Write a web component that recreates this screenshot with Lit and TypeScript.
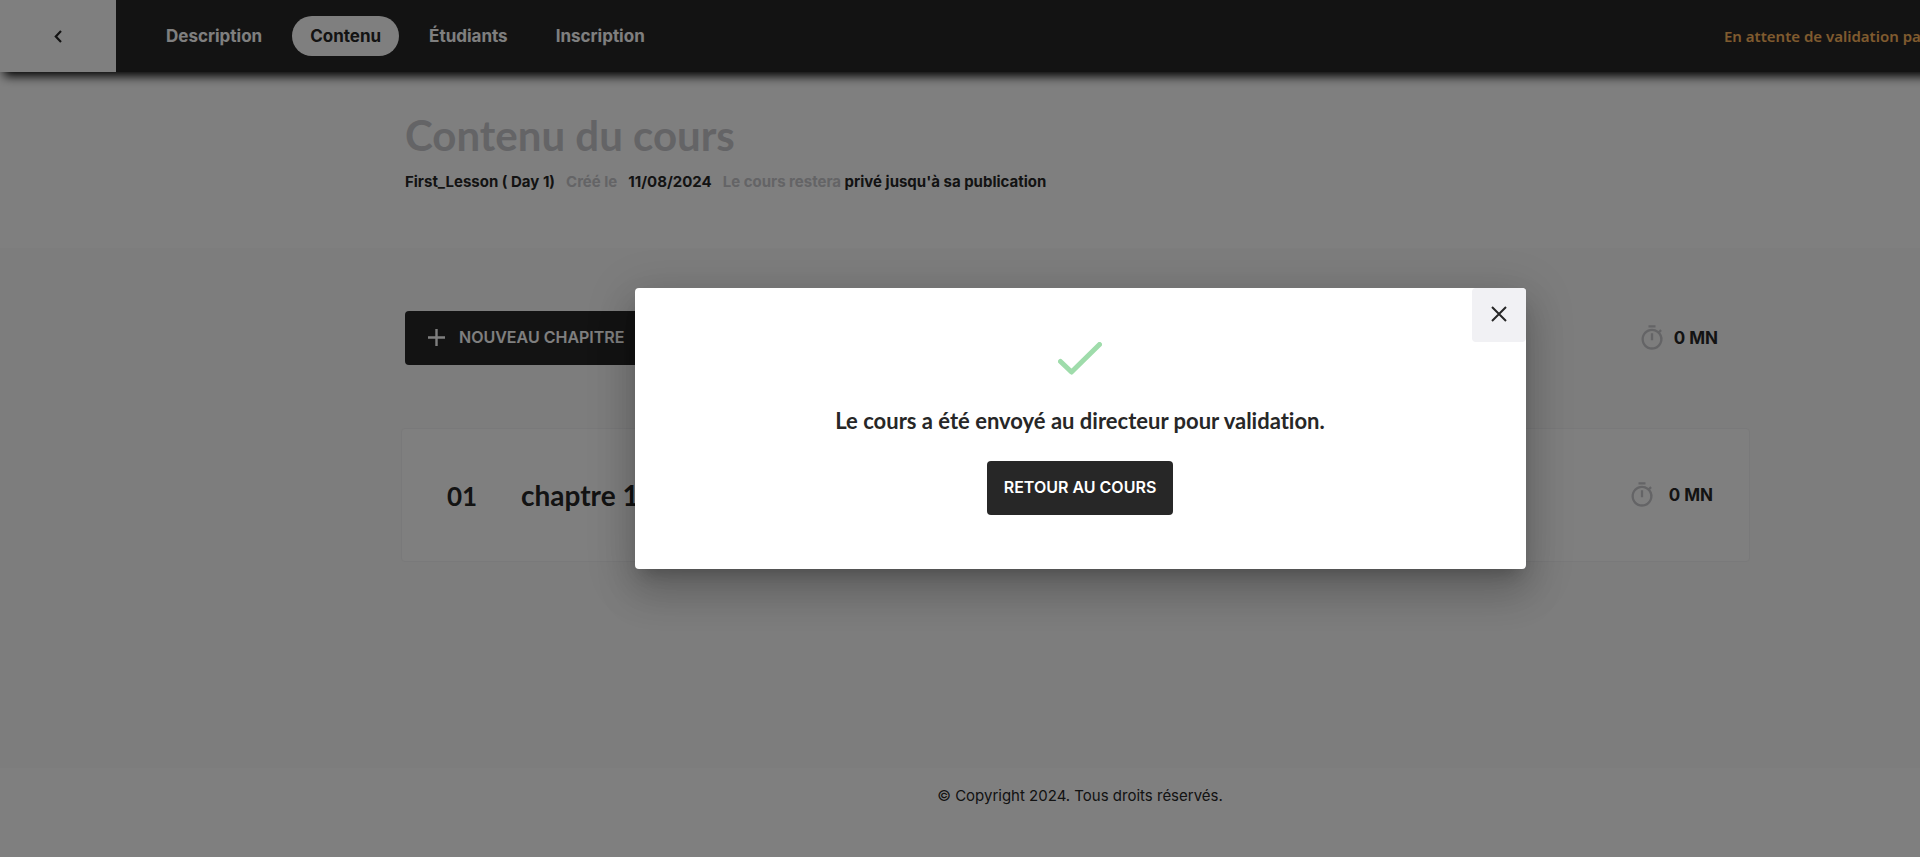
import { LitElement, html, css } from 'lit';
import { customElement, property } from 'lit/decorators.js';

@customElement('course-duration')
class CourseDuration extends LitElement {
  @property({ type: Number }) minutes = 0;

  static styles = css`
    :host {
      display: inline-flex;
      align-items: center;
      gap: var(--duration-gap, 8px);
      font-size: 17px;
      font-weight: 700;
      line-height: 24px;
      color: #272727;
    }
    .icon {
      display: block;
      width: 28px;
      height: 28px;
      fill: #c8c8cc;
    }
  `;

  render() {
    return html`
      <svg class="icon" viewBox="0 0 24 24" aria-hidden="true">
        <path
          d="M15 1H9v2h6V1zm-4 13h2V8h-2v6zm8.03-6.61 1.42-1.42c-.43-.51-.9-.99-1.41-1.41l-1.42 1.42A8.96 8.96 0 0 0 12 4c-4.97 0-9 4.03-9 9s4.02 9 9 9a8.994 8.994 0 0 0 7.03-14.61zM12 20c-3.87 0-7-3.13-7-7s3.13-7 7-7 7 3.13 7 7-3.13 7-7 7z"
        />
      </svg>
      <span>${this.minutes} MN</span>
    `;
  }
}

@customElement('app-root')
class AppRoot extends LitElement {
  static styles = css`
    :host {
      display: block;
      overflow: hidden;
      font-family: Inter, 'Liberation Sans', sans-serif;
      color: #272727;
    }
    * {
      box-sizing: border-box;
    }
    h1,
    h2,
    p {
      margin: 0;
    }
    button {
      font: inherit;
      border: 0;
      cursor: pointer;
    }
    .page {
      position: relative;
      display: flex;
      flex-direction: column;
      width: 112.5%;
      min-height: 100vh;
      background: #fff;
    }
    .topbar {
      position: relative;
      display: flex;
      height: 72px;
      background: #272727;
      box-shadow: 0 8px 10px -4px #000;
    }
    .back {
      display: flex;
      align-items: center;
      justify-content: center;
      width: 116px;
      padding: 0;
      background: #fff;
    }
    .back svg {
      width: 8px;
      height: 13px;
    }
    .nav {
      display: flex;
      flex: 1;
      align-items: center;
      gap: 12px;
      padding-left: 32px;
    }
    .nav a {
      padding: 8px 18px;
      border-radius: 20px;
      font-size: 17px;
      font-weight: 700;
      line-height: 24px;
      color: #fff;
      text-decoration: none;
    }
    .nav a.active {
      background: #fff;
      color: #272727;
    }
    .status {
      align-self: center;
      width: 436px;
      font-family: 'Noto Sans', sans-serif;
      font-size: 15px;
      font-weight: 600;
      line-height: 24px;
      color: #feb65e;
    }
    .container {
      width: 100%;
      max-width: 1350px;
      margin: 0 auto;
    }
    .hero {
      padding: 39px 0 54px;
    }
    .hero h1 {
      font-family: Lato, sans-serif;
      font-size: 42px;
      font-weight: 700;
      line-height: 48px;
      color: #c8c8cc;
    }
    .meta {
      display: flex;
      gap: 11px;
      padding-top: 11px;
      font-size: 15px;
      font-weight: 700;
      line-height: 24px;
    }
    .muted {
      color: #c8c8cc;
    }
    .content {
      flex: 1;
      padding-top: 63px;
      background: #fafafa;
    }
    .toolbar {
      display: flex;
      align-items: center;
      justify-content: space-between;
      padding-right: 37px;
    }
    .primary {
      display: flex;
      align-items: center;
      height: 54px;
      padding: 0 17px 2px;
      border-radius: 4px;
      background: #272727;
      color: #fff;
      font-size: 16px;
      font-weight: 600;
      line-height: 24px;
      text-transform: uppercase;
    }
    .add {
      gap: 14px;
      padding: 0 23px 2px;
    }
    .add svg {
      width: 17px;
      height: 17px;
    }
    .chapter {
      display: flex;
      align-items: center;
      height: 134px;
      margin: 63px 5px 0 -4px;
      padding: 0 36px 0 45px;
      border: 1px solid #f2f2f4;
      border-radius: 4px;
      background: #fff;
      --duration-gap: 13px;
    }
    .chapter h2 {
      display: flex;
      flex: 1;
      align-items: baseline;
      font-family: Lato, sans-serif;
      font-size: 28px;
      font-weight: 700;
      line-height: 36px;
    }
    .chapter .index {
      width: 74px;
      font-size: 26px;
    }
    .footer {
      height: 89px;
      padding-top: 16px;
      font-size: 15px;
      line-height: 24px;
      text-align: center;
    }
    .backdrop {
      position: absolute;
      inset: 0;
      display: flex;
      align-items: center;
      justify-content: center;
      background: rgba(0, 0, 0, 0.5);
    }
    .modal {
      position: relative;
      display: flex;
      flex-direction: column;
      align-items: center;
      width: 100%;
      max-width: 891px;
      padding: 54px;
      border-radius: 4px;
      background: #fff;
      box-shadow: 0 11px 15px -7px rgba(0, 0, 0, 0.2), 0 24px 38px 3px rgba(0, 0, 0, 0.14),
        0 9px 46px 8px rgba(0, 0, 0, 0.12);
    }
    .close {
      position: absolute;
      top: 0;
      right: 0;
      display: flex;
      justify-content: center;
      width: 54px;
      height: 54px;
      padding: 18px 0 0;
      border-radius: 4px;
      background: #f1f1f4;
    }
    .close svg {
      width: 16px;
      height: 16px;
    }
    .check {
      width: 44px;
      height: 33px;
    }
    .message {
      padding: 31px 0 25px;
      font-family: Lato, sans-serif;
      font-size: 22px;
      font-weight: 700;
      font-variant-ligatures: none;
      line-height: 30px;
      text-align: center;
    }
  `;

  render() {
    return html`
      <div class="page">
        <header class="topbar">
          <button class="back" aria-label="Retour">
            <svg viewBox="0 0 8 13" fill="none" stroke="#272727" stroke-width="2.2">
              <path d="M7 1 1.8 6.5 7 12" />
            </svg>
          </button>
          <nav class="nav">
            <a href="#description">Description</a>
            <a href="#contenu" class="active" aria-current="page">Contenu</a>
            <a href="#etudiants">Étudiants</a>
            <a href="#inscription">Inscription</a>
          </nav>
          <span class="status">En attente de validation par</span>
        </header>

        <section class="hero">
          <div class="container">
            <h1>Contenu du cours</h1>
            <p class="meta">
              <span>First_Lesson ( Day 1)</span>
              <span class="muted">Créé le</span>
              <span>11/08/2024</span>
              <span><span class="muted">Le cours restera</span> privé jusqu'à sa publication</span>
            </p>
          </div>
        </section>

        <main class="content">
          <div class="container">
            <div class="toolbar">
              <button class="primary add">
                <svg viewBox="0 0 17 17" stroke="#fff" stroke-width="2.4" aria-hidden="true">
                  <path d="M8.5 0v17M0 8.5h17" />
                </svg>
                Nouveau chapitre
              </button>
              <course-duration .minutes=${0}></course-duration>
            </div>
            <article class="chapter">
              <h2><span class="index">01</span><span>chaptre 1</span></h2>
              <course-duration .minutes=${0}></course-duration>
            </article>
          </div>
        </main>

        <footer class="footer">© Copyright 2024. Tous droits réservés.</footer>

        <div class="backdrop">
          <div class="modal" role="dialog" aria-modal="true" aria-labelledby="message">
            <button class="close" aria-label="Fermer">
              <svg viewBox="0 0 16 16" stroke="#272727" stroke-width="2">
                <path d="m1 1 14 14M15 1 1 15" />
              </svg>
            </button>
            <svg
              class="check"
              viewBox="0 0 44 33"
              fill="none"
              stroke="#9fdcab"
              stroke-width="5"
              stroke-linecap="round"
              stroke-linejoin="round"
              aria-hidden="true"
            >
              <path d="M2.5 19.5 13.5 30 41.5 2.5" />
            </svg>
            <p class="message" id="message">Le cours a été envoyé au directeur pour validation.</p>
            <button class="primary">Retour au cours</button>
          </div>
        </div>
      </div>
    `;
  }
}
